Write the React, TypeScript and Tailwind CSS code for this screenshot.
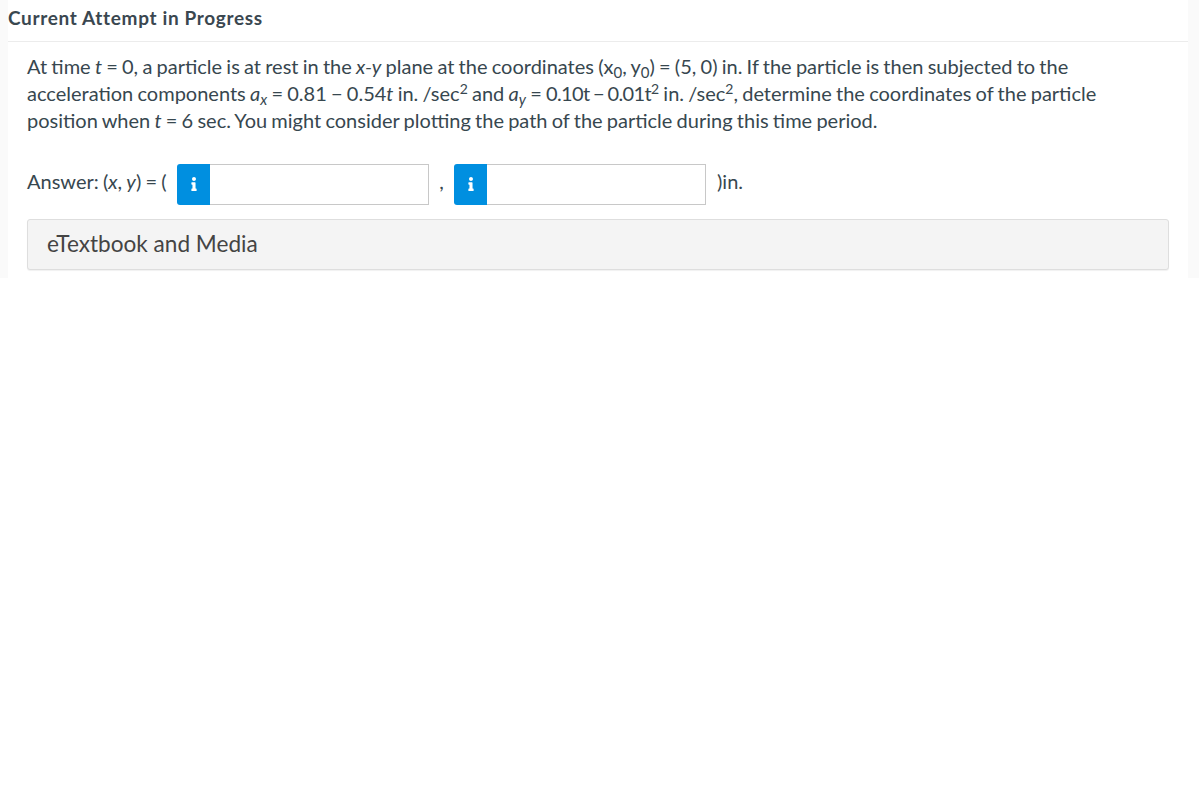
import { FaInfo } from "react-icons/fa";

const AnswerInput = () => {
  return (
    <div className="flex h-[41px] w-[252px]">
      <div className="flex w-[33px] items-center justify-center rounded-l-[3px] bg-[#008fe0] text-white">
        <FaInfo size={14} />
      </div>
      <input type="text" className="min-w-0 flex-1 border border-l-0 border-[#c8c8c8] bg-white" />
    </div>
  );
};

const Sup = ({ children }: { children: React.ReactNode }) => (
  <sup className="text-[14px] leading-none">{children}</sup>
);

const Sub = ({ children }: { children: React.ReactNode }) => (
  <sub className="text-[15px] leading-none">{children}</sub>
);

export default function App() {
  return (
    <div className="min-h-screen bg-white font-['Lato','Open_Sans',sans-serif] text-[#37474f]">
      <div className="bg-[#fafafa] pl-2 pr-[11px]">
        <div className="h-[278px] bg-white">
          <div className="flex h-[42px] items-center border-b border-[#ececec] pb-[6px] text-[19px] font-bold leading-none tracking-[0.66px] text-[#3a4750]">
            Current Attempt in Progress
          </div>
          <div className="px-[19px] pt-[11px]">
            <p className="text-[20px] leading-[27px] [word-spacing:-0.9px]">
              At time <i>t</i> = 0, a particle is at rest in the <i>x-y</i> plane at the coordinates (x
              <Sub>0</Sub>, y<Sub>0</Sub>) = (5, 0) in. If the particle is then subjected to the
              <br />
              acceleration components <i>a</i>
              <Sub>
                <i>x</i>
              </Sub>{" "}
              = 0.81 − 0.54<i>t</i> in. /sec<Sup>2</Sup> and <i>a</i>
              <Sub>
                <i>y</i>
              </Sub>{" "}
              = <span className="tracking-[-0.65px]">0.10t − 0.01t</span>
              <Sup>2</Sup> in. /sec<Sup>2</Sup>, determine the coordinates of the particle
              <br />
              position when <i>t</i> = 6 sec. You might consider plotting the path of the particle during this
              time period.
            </p>
            <div className="mt-[29.5px] flex h-[41px] items-center text-[20px] [word-spacing:-0.9px]">
              <span className="w-[150px] whitespace-nowrap pb-[6px]">
                Answer: (<i>x</i>, <i>y</i>) = (
              </span>
              <AnswerInput />
              <span className="w-[25px] pb-[6px] text-center">,</span>
              <AnswerInput />
              <span className="ml-[11px] pb-[6px]">)in.</span>
            </div>
            <div className="mt-[14px] flex h-[51px] items-center rounded-[3px] border border-[#dedede] bg-[#f4f4f4] px-[19px] text-[22.6px] text-[#444444] shadow-[0_1px_1px_rgba(0,0,0,0.06)]">
              eTextbook and Media
            </div>
          </div>
        </div>
      </div>
    </div>
  );
}
